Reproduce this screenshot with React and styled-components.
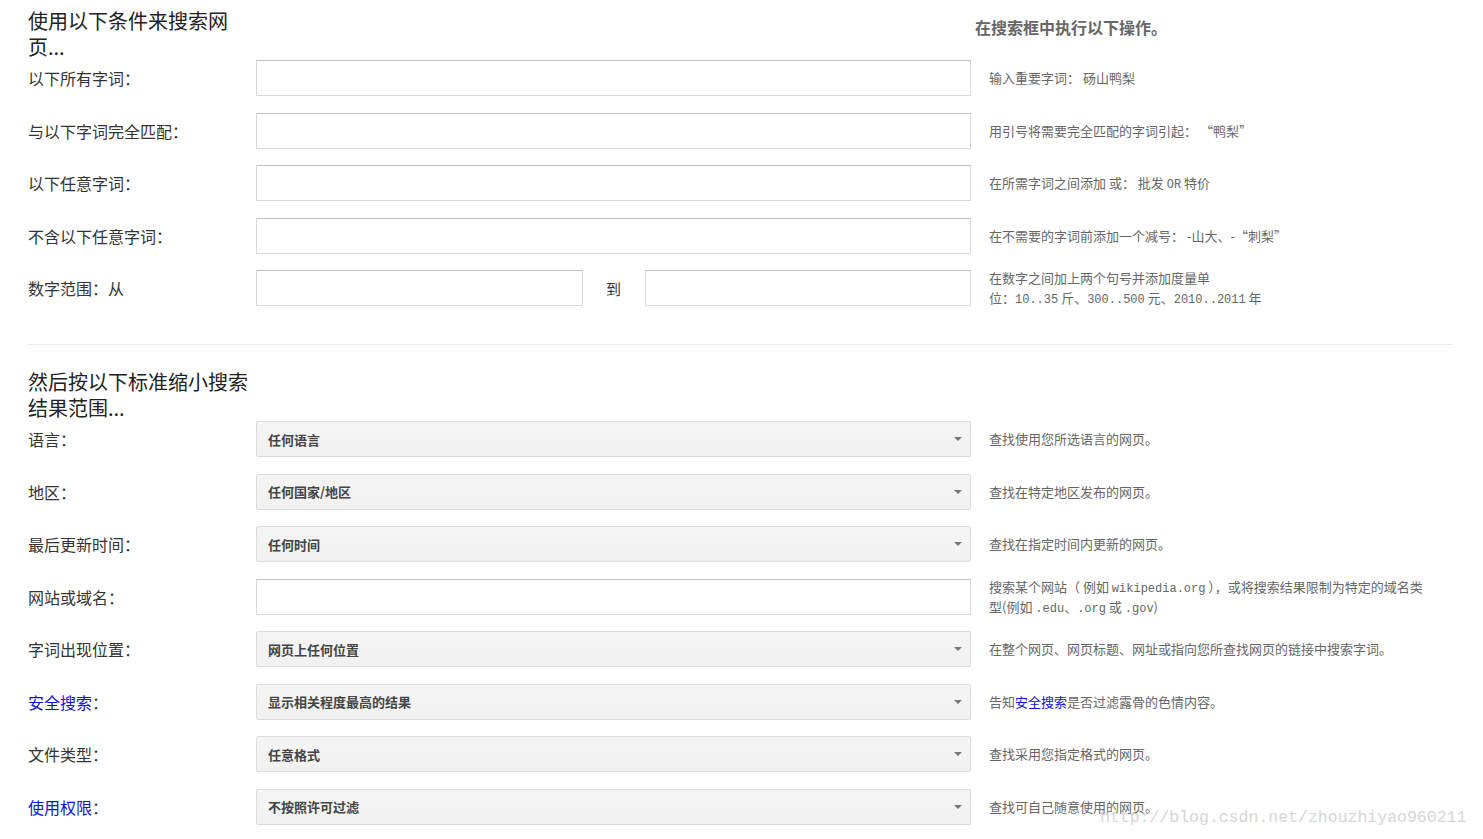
import React from "react";
import styled, { createGlobalStyle } from "styled-components";

const GlobalStyle = createGlobalStyle`
    html, body {
        margin: 0;
        padding: 0;
        background: #fff;
    }
    body {
        font-family: "Noto Sans CJK SC", "Noto Sans", sans-serif;
        color: #333;
    }
`;

const Page = styled.div`
    position: relative;
    width: 1483px;
    min-height: 839px;
    box-sizing: border-box;
    padding: 8px 30px 0 28px;
`;

const Header = styled.div`
    display: grid;
    grid-template-columns: 228px 715px 1fr;
`;

const Title = styled.h2`
    margin: 0;
    font-size: 20px;
    font-weight: 400;
    line-height: 26px;
    color: #222;
    width: 228px;
`;

const Heading = styled.h3`
    grid-column: 3;
    margin: 8px 0 0 4px;
    font-size: 16px;
    font-weight: 700;
    line-height: 22px;
    color: #666;
`;

const Rows = styled.div`
    display: grid;
    grid-template-columns: 228px 715px 1fr;
    grid-auto-rows: 36px;
    row-gap: 16.5px;
    align-items: center;
`;

const Label = styled.div`
    font-size: 16px;
    line-height: 22px;
    color: #333;
`;

const Link = styled.span`
    color: #1111dd;
`;

const TextInput = styled.input`
    box-sizing: border-box;
    width: 100%;
    height: 36px;
    margin: 0;
    border: 1px solid #d9d9d9;
    border-top-color: #c0c0c0;
    border-radius: 1px;
    background: #fff;
    outline: none;
`;

const Range = styled.div`
    display: grid;
    grid-template-columns: 1fr 62px 1fr;
    align-items: center;
`;

const To = styled.span`
    text-align: center;
    font-size: 15px;
    color: #333;
`;

const SelectBox = styled.div`
    box-sizing: border-box;
    height: 36px;
    display: flex;
    align-items: center;
    justify-content: space-between;
    padding: 0 8px 0 11px;
    border: 1px solid #dcdcdc;
    border-radius: 2px;
    background: linear-gradient(#f5f5f5, #f1f1f1);
    font-size: 13px;
    font-weight: 700;
    color: #444;
`;

const Arrow = styled.span`
    width: 0;
    height: 0;
    border-left: 4.5px solid transparent;
    border-right: 4.5px solid transparent;
    border-top: 4.5px solid #777;
`;

const Help = styled.div`
    padding-left: 18px;
    font-size: 13px;
    line-height: 20px;
    color: #666;
`;

const Code = styled.span`
    font-family: "Liberation Mono", monospace;
    font-size: 12px;
    line-height: 1;
`;

const Divider = styled.hr`
    margin: 38px 0 24px;
    border: 0;
    border-top: 1px solid #ebebeb;
`;

const Watermark = styled.div`
    position: absolute;
    left: 1100px;
    top: 808px;
    font-family: "Liberation Mono", monospace;
    font-size: 16.5px;
    color: #d6d6d6;
    white-space: nowrap;
    pointer-events: none;
`;

const Select = ({ value }) => (
    <SelectBox>
        <span>{value}</span>
        <Arrow />
    </SelectBox>
);

const narrow = [
    { label: "语言：", value: "任何语言", help: "查找使用您所选语言的网页。" },
    { label: "地区：", value: "任何国家/地区", help: "查找在特定地区发布的网页。" },
    { label: "最后更新时间：", value: "任何时间", help: "查找在指定时间内更新的网页。" },
];

const narrowEnd = [
    { label: "字词出现位置：", value: "网页上任何位置", help: "在整个网页、网页标题、网址或指向您所查找网页的链接中搜索字词。" },
    {
        label: <><Link>安全搜索</Link>：</>,
        value: "显示相关程度最高的结果",
        help: <>告知<Link>安全搜索</Link>是否过滤露骨的色情内容。</>,
    },
    { label: "文件类型：", value: "任意格式", help: "查找采用您指定格式的网页。" },
    { label: <><Link>使用权限</Link>：</>, value: "不按照许可过滤", help: "查找可自己随意使用的网页。" },
];

const App = () => {
    return (
        <Page>
            <GlobalStyle />
            <Header>
                <Title>使用以下条件来搜索网页...</Title>
                <Heading>在搜索框中执行以下操作。</Heading>
            </Header>
            <Rows>
                <Label>以下所有字词：</Label>
                <TextInput />
                <Help>输入重要字词： 砀山鸭梨</Help>

                <Label>与以下字词完全匹配：</Label>
                <TextInput />
                <Help>用引号将需要完全匹配的字词引起： “鸭梨”</Help>

                <Label>以下任意字词：</Label>
                <TextInput />
                <Help>在所需字词之间添加 或： 批发 <Code>OR</Code> 特价</Help>

                <Label>不含以下任意字词：</Label>
                <TextInput />
                <Help>在不需要的字词前添加一个减号： -山大、-“刺梨”</Help>

                <Label>数字范围：从</Label>
                <Range>
                    <TextInput />
                    <To>到</To>
                    <TextInput />
                </Range>
                <Help>
                    在数字之间加上两个句号并添加度量单
                    <br />
                    位：<Code>10..35</Code> 斤、<Code>300..500</Code> 元、<Code>2010..2011</Code> 年
                </Help>
            </Rows>

            <Divider />

            <Title>然后按以下标准缩小搜索结果范围...</Title>
            <Rows>
                {narrow.map((r, i) => (
                    <React.Fragment key={i}>
                        <Label>{r.label}</Label>
                        <Select value={r.value} />
                        <Help>{r.help}</Help>
                    </React.Fragment>
                ))}

                <Label>网站或域名：</Label>
                <TextInput />
                <Help>
                    搜索某个网站（ 例如 <Code>wikipedia.org</Code> ），或将搜索结果限制为特定的域名类
                    <br />
                    型(例如 <Code>.edu</Code>、<Code>.org</Code> 或 <Code>.gov</Code>)
                </Help>

                {narrowEnd.map((r, i) => (
                    <React.Fragment key={i}>
                        <Label>{r.label}</Label>
                        <Select value={r.value} />
                        <Help>{r.help}</Help>
                    </React.Fragment>
                ))}
            </Rows>
            <Watermark>http://blog.csdn.net/zhouzhiyao960211</Watermark>
        </Page>
    );
};

export default App;
